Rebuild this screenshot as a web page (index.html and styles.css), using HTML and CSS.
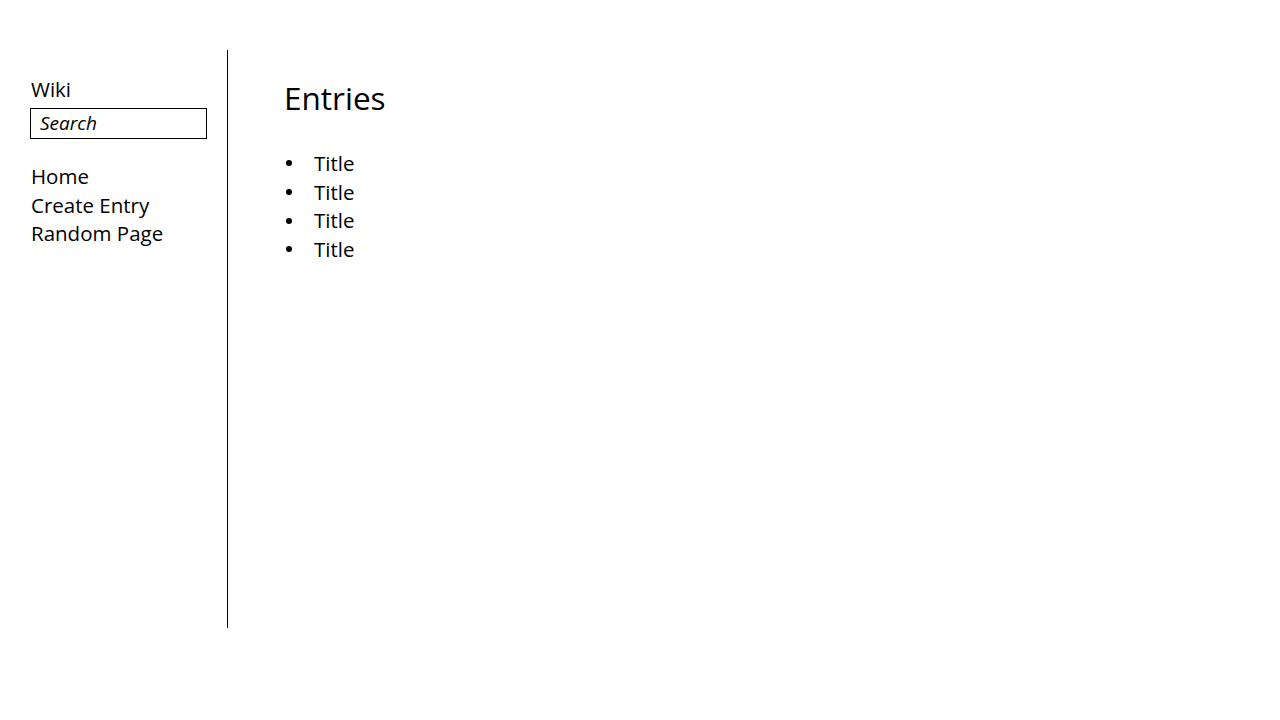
FILE: index.html
```html
<!DOCTYPE html>
<html>
<head>
<meta charset="utf-8">
<link rel="stylesheet" href="styles.css">
</head>
<body>
<div class="page">
  <aside class="sidebar">
    <div class="brand">Wiki</div>
    <div class="search">Search</div>
    <nav class="nav">
      <div>Home</div>
      <div>Create Entry</div>
      <div>Random Page</div>
    </nav>
  </aside>
  <main class="main">
    <h1 class="title">Entries</h1>
    <ul class="entries">
      <li>Title</li>
      <li>Title</li>
      <li>Title</li>
      <li>Title</li>
    </ul>
  </main>
</div>
</body>
</html>
```
FILE: styles.css
```css
html, body {
  margin: 0;
  padding: 0;
  background: #fff;
}
body {
  font-family: "Open Sans", "Liberation Sans", sans-serif;
  color: #000;
  width: 1280px;
  height: 720px;
  overflow: hidden;
}
.page {
  display: flex;
  padding-top: 50px;
}
.sidebar {
  width: 196px;
  height: 578px;
  padding-left: 31px;
  border-right: 1px solid #000;
  box-sizing: content-box;
}
.brand {
  font-size: 20.5px;
  line-height: 28px;
  margin-top: 25px;
}
.search {
  margin-top: 5px;
  width: 166px;
  height: 29px;
  border: 1px solid #000;
  margin-left: -1px;
  padding-left: 9px;
  font-style: italic;
  font-size: 19px;
  line-height: 29px;
}
.nav {
  margin-top: 23px;
  font-size: 20.5px;
  line-height: 28.7px;
}
.main {
  padding-left: 56px;
}
.title {
  margin: 27px 0 0 0;
  font-weight: normal;
  font-size: 31.5px;
  line-height: 42px;
}
.entries {
  list-style: none;
  margin: 30px 0 0 0;
  padding: 0;
  font-size: 20.5px;
  line-height: 28.7px;
}
.entries li {
  display: flex;
  align-items: center;
}
.entries li::before {
  content: "";
  width: 6px;
  height: 6px;
  border-radius: 50%;
  background: #000;
  margin-left: 2px;
  margin-right: 22px;
}
```
